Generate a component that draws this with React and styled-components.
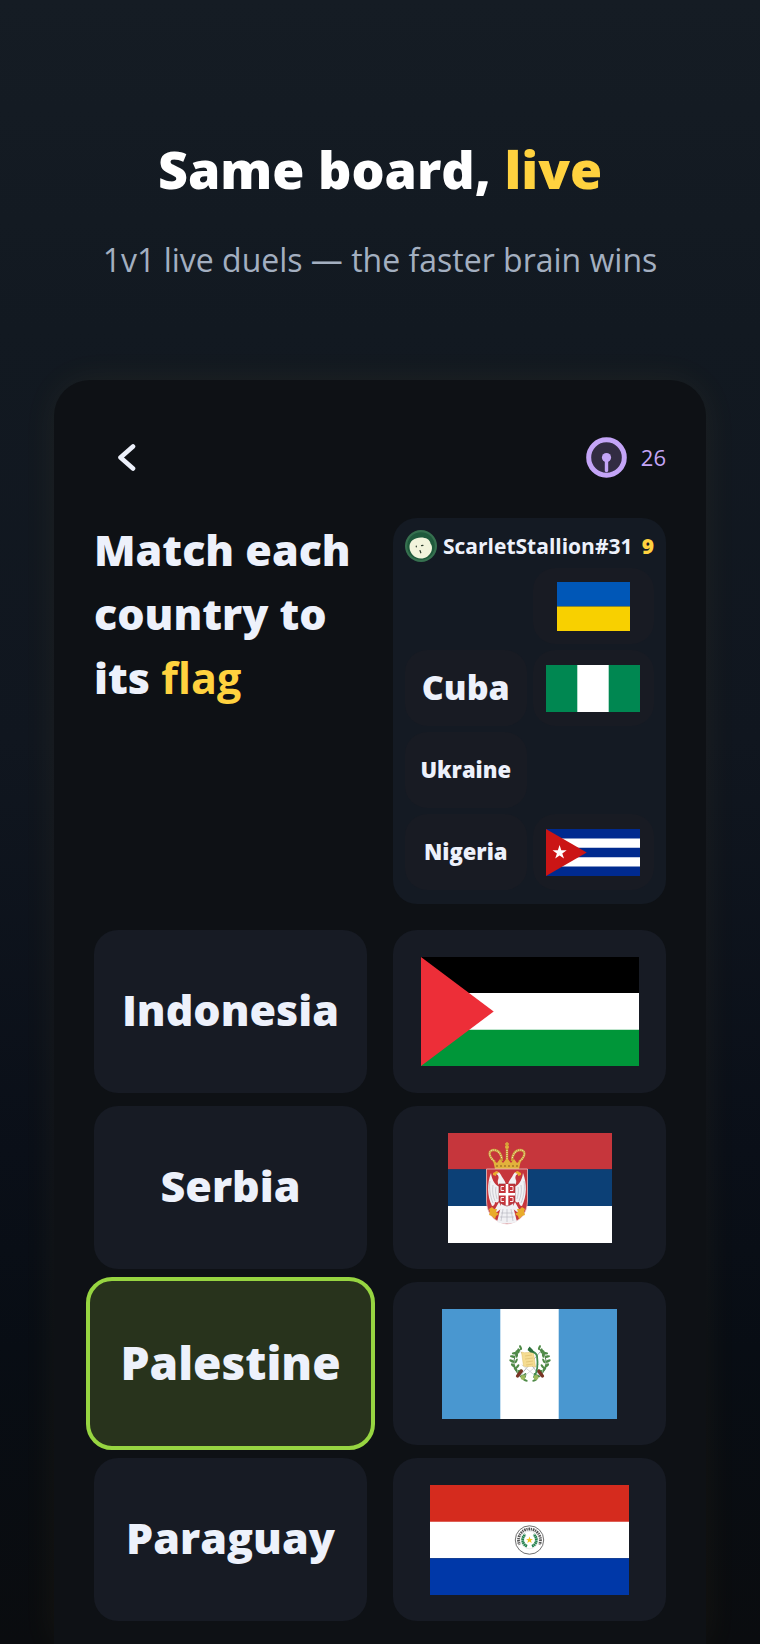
import React, { useState } from 'react';
import styled, { createGlobalStyle, css } from 'styled-components';

const colors = {
  text: '#edf1fb',
  muted: '#a3afc0',
  yellow: '#ffd23f',
  purple: '#c4a5f7',
  green: '#97d541',
  greenDark: '#28331c',
  phone: '#0e1115',
  panel: '#141a23',
  tile: '#171b24',
  miniTile: '#181b23',
};

const GlobalStyle = createGlobalStyle`
  * {
    box-sizing: border-box;
  }
  body {
    margin: 0;
    background: #0b0d0f;
    color: ${colors.text};
    font-family: 'Open Sans', 'Noto Sans', sans-serif;
  }
  button {
    font-family: inherit;
    color: inherit;
    border: 0;
    padding: 0;
    cursor: pointer;
  }
`;

const flexCenter = css`
  display: flex;
  align-items: center;
  justify-content: center;
`;

const Page = styled.main`
  display: flex;
  flex-direction: column;
  min-height: 100vh;
  overflow: hidden;
  padding: 132px 54px 0;
  background: linear-gradient(
    180deg,
    #151c24 0%,
    #121921 20%,
    #10161f 45%,
    #0a0f18 70%,
    #080d14 82%,
    #0a0c0f 100%
  );
`;

const Intro = styled.header`
  text-align: center;
`;

const Title = styled.h1`
  margin: 0;
  color: #fff;
  font-size: 52px;
  font-weight: 800;
  line-height: 74px;
`;

const Subtitle = styled.p`
  margin: 32px 0 0;
  color: ${colors.muted};
  font-size: 32px;
  font-weight: 400;
  line-height: 44px;
`;

const Accent = styled.span`
  color: ${colors.yellow};
`;

const Phone = styled.section`
  flex: 1 0 auto;
  margin-top: 98px;
  padding: 56px 40px 20px;
  border-radius: 36px 36px 0 0;
  background: ${colors.phone};
  box-shadow: 0 0 36px rgba(255, 210, 63, 0.06);
`;

const TopBar = styled.div`
  display: flex;
  align-items: center;
  justify-content: space-between;
  height: 42px;
`;

const BackButton = styled.button`
  ${flexCenter};
  width: 64px;
  height: 42px;
  background: none;
`;

const Timer = styled.div`
  display: flex;
  align-items: center;
  gap: 14px;
  color: ${colors.purple};
  font-size: 22px;
  line-height: 30px;
`;

const Columns = styled.div`
  display: grid;
  grid-template-columns: 1fr 1fr;
  column-gap: 26px;
`;

const Overview = styled(Columns)`
  align-items: start;
  margin-top: 40px;
`;

const Prompt = styled.h2`
  margin: 0;
  font-size: 43px;
  font-weight: 800;
  line-height: 64px;

  ${Accent} {
    font-weight: 700;
  }
`;

const Opponent = styled.aside`
  padding: 12px 12px 14px;
  border-radius: 24px;
  background: ${colors.panel};
`;

const OpponentHead = styled.div`
  display: flex;
  align-items: center;
  gap: 6px;
  height: 32px;
  font-size: 21px;
  font-weight: 700;
  line-height: 28px;
`;

const Score = styled.strong`
  margin-left: auto;
  color: ${colors.yellow};
  font-weight: 800;
`;

const MiniBoard = styled.div`
  display: grid;
  grid-template-columns: 1fr 1fr;
  grid-auto-rows: 76px;
  gap: 6px;
  margin-top: 6px;
`;

const MiniTile = styled.div`
  ${flexCenter};
  padding-bottom: ${props => (props.$label ? 2 : 0)}px;
  border-radius: 22px;
  background: ${props => (props.$empty ? 'none' : colors.miniTile)};
  font-size: ${props => (props.$large ? 34 : 22)}px;
  font-weight: 800;
`;

const Board = styled(Columns)`
  grid-auto-rows: 163px;
  row-gap: 13px;
  margin-top: 26px;
`;

const Tile = styled.button`
  ${flexCenter};
  padding-bottom: ${props => (props.$label ? 4 : 0)}px;
  border-radius: 24px;
  background: ${colors.tile};
  font-size: 43px;
  font-weight: 800;

  ${props =>
    props.$selected &&
    css`
      margin: -5px -8px;
      border: 4px solid ${colors.green};
      border-radius: 26px;
      background: ${colors.greenDark};
      font-size: 46px;
    `};
`;

const FlagSvg = styled.svg`
  display: block;
  flex-shrink: 0;
`;

const Flag = ({ label, width, height, children }) => (
  <FlagSvg
    role="img"
    aria-label={label}
    width={width}
    height={height}
    viewBox={`0 0 ${width} ${height}`}
  >
    {children}
  </FlagSvg>
);

const UkraineFlag = () => (
  <Flag label="Blue and yellow flag" width={73} height={49}>
    <path fill="#0057b7" d="M0 0h73v24.5H0z" />
    <path fill="#f8d000" d="M0 24.5h73V49H0z" />
  </Flag>
);

const NigeriaFlag = () => (
  <Flag label="Green, white and green flag" width={94} height={47}>
    <path fill="#008751" d="M0 0h94v47H0z" />
    <path fill="#fff" d="M31.3 0h31.4v47H31.3z" />
  </Flag>
);

const CubaFlag = () => (
  <Flag label="Striped flag with a star" width={94} height={47}>
    <path fill="#002a8f" d="M0 0h94v47H0z" />
    <path fill="#fff" d="M0 9.4h94v9.4H0zM0 28.2h94v9.4H0z" />
    <path fill="#cb1515" d="M0 0l40.7 23.5L0 47z" />
    <path
      fill="#fff"
      d="M13.6 16l1.7 5.2h5.4l-4.4 3.2 1.7 5.2-4.4-3.2-4.4 3.2 1.7-5.2-4.4-3.2h5.4z"
    />
  </Flag>
);

const PalestineFlag = () => (
  <Flag label="Black, white and green flag" width={218} height={109}>
    <path d="M0 0h218v36.3H0z" />
    <path fill="#fff" d="M0 36h218v37H0z" />
    <path fill="#009639" d="M0 72.7h218V109H0z" />
    <path fill="#ed2e38" d="M0 0l72.7 54.5L0 109z" />
  </Flag>
);

const SerbiaFlag = () => (
  <Flag label="Red, blue and white flag with arms" width={164} height={110}>
    <path fill="#c6363c" d="M0 0h164v36.5H0z" />
    <path fill="#0c4076" d="M0 36.3h164v37H0z" />
    <path fill="#fff" d="M0 73h164v37H0z" />
    {/* crown */}
    <g fill="none" stroke="#c99a35" strokeWidth="2.4">
      <path d="M47 29c-7-6-7-12-1-12 5 0 8 5 8 11" />
      <path d="M71 29c7-6 7-12 1-12-5 0-8 5-8 11" />
      <path d="M59 16v12" />
    </g>
    <g fill="none" stroke="#f7e9b5" strokeWidth="1.2" strokeDasharray="1 1">
      <path d="M46 28c-6-5-6-11 0-11 4 0 7 4 8 9" />
      <path d="M72 28c6-5 6-11 0-11-4 0-7 4-8 9" />
      <path d="M59 17v10" />
    </g>
    <path
      fill="#e2b23c"
      d="M45 27l4 3 3-4 3 4 4-5 4 5 3-4 3 4 4-3-2 9H47z"
    />
    <path stroke="#8a5a1c" strokeDasharray="2 2" d="M48 33h22" />
    <circle cx="59" cy="14" r="2" fill="#e2b23c" />
    <path stroke="#d9a93a" strokeWidth="1.4" d="M59 9v5M57 11h4" />
    {/* shield */}
    <path
      fill="#c6363c"
      stroke="#e8c3c5"
      strokeWidth="0.8"
      d="M38.5 36h41v32c0 13-9 22-20.5 23C47.500 90 38.500 81 38.500 68z"
    />
    {/* double headed eagle */}
    <g fill="#f1f1f4">
      <path d="M43 40c-4 10-4 23 1 33 2 0 3-2 3-4 2 1 4 0 4-2l3-13c-6 0-10-6-11-14z" />
      <path d="M75 40c4 10 4 23-1 33-2 0-3-2-3-4-2 1-4 0-4-2l-3-13c6 0 10-6 11-14z" />
      <path d="M58 53c0-5-3-7-5-11-1-3-4-4-6-3l1 2c3 1 3 4 2 6-1 3 1 6 4 8z" />
      <path d="M60 53c0-5 3-7 5-11 1-3 4-4 6-3l-1 2c-3 1-3 4-2 6 1 3-1 6-4 8z" />
      <path d="M52 51h14l-1 22 4 16c-6 2-14 2-20 0l4-16z" />
      <path d="M51 69l3 6-5 4-3-1zM67 69l-3 6 5 4 3-1z" />
    </g>
    <g fill="none" stroke="#b3b3bc" strokeWidth="0.6">
      <path d="M42 48c-1 7 0 15 3 22M45 52c-1 6 0 11 2 16M48 54c-1 4 0 8 1 12" />
      <path d="M76 48c1 7 0 15-3 22M73 52c1 6 0 11-2 16M70 54c1 4 0 8-1 12" />
      <path d="M55 76l-2 12M59 76v13M63 76l2 12M53 80h12M52 84h14" />
    </g>
    <g fill="#e9ac2c">
      <path d="M45 40l4-2 2 2-3 1v2l-3-1zM73 40l-4-2-2 2 3 1v2l3-1z" />
      <path d="M41 76l3-2 2 2h3l-1 3 3 2-3 2-1 3-3-3-3-1 1-3z" />
      <path d="M77 76l-3-2-2 2h-3l1 3-3 2 3 2 1 3 3-3 3-1-1-3z" />
    </g>
    <path
      fill="#c6363c"
      stroke="#8f2931"
      strokeWidth="0.6"
      d="M51 51h16v15c0 4-4 6-8 7-4-1-8-3-8-7z"
    />
    <path fill="#fff" d="M57.700 51h2.600v9H67v2.600h-6.700v10h-2.600v-10H51V60h6.700z" />
    <g fill="none" stroke="#fff" strokeWidth="0.9">
      <path d="M56 53.500h-3v4h3M62 53.500h3v4h-3" />
      <path d="M56 64.500h-3v4h3M62 64.500h3v4h-3" />
    </g>
  </Flag>
);

const laurel = [
  [0, 30, 20],
  [-4, 27, -20],
  [-7, 23, -35],
  [-9, 19, -50],
  [-10, 14, -65],
  [-9, 9, -80],
  [-7, 5, -95],
  [-4, 2, -115],
];

const LaurelBranch = () => (
  <g>
    <path
      fill="none"
      stroke="#35692f"
      strokeWidth="0.9"
      d="M0 30C-8 27-12 18-9 8-8 5-6 3-3 1"
    />
    {laurel.map(([x, y, turn]) => (
      <g key={y} fill="#4f8a47" transform={`translate(${x} ${y}) rotate(${turn})`}>
        <ellipse cx="0" cy="-2.4" rx="1.3" ry="2.8" />
        <ellipse cx="2" cy="1.6" rx="2.6" ry="1.1" />
      </g>
    ))}
  </g>
);

const GuatemalaFlag = () => (
  <Flag label="Light blue and white flag with a wreath" width={175} height={110}>
    <path fill="#4997d0" d="M0 0h175v110H0z" />
    <path fill="#fff" d="M58.3 0h58.4v110H58.3z" />
    <g transform="translate(82 39)">
      <LaurelBranch />
    </g>
    <g transform="translate(94 39) scale(-1 1)">
      <LaurelBranch />
    </g>
    {/* rifles and swords */}
    <g fill="none" strokeLinecap="round">
      <path stroke="#a7a9ae" strokeWidth="0.9" d="M79 43l20 25M98 43L77 68" />
      <path stroke="#c9cbd0" strokeWidth="0.7" d="M80 69l17-14M96 69L80 56" />
      <path stroke="#7a3424" strokeWidth="3.2" d="M75.500 67l4-5M100.500 67l-4-5" />
    </g>
    {/* scroll */}
    <path
      fill="#f5dc92"
      stroke="#dfbf68"
      strokeWidth="0.5"
      d="M79.500 43c4 2 8-1 12 1l2 14c-4-2-8 1-12-1z"
    />
    <path
      fill="none"
      stroke="#d9b868"
      strokeWidth="0.6"
      d="M83 47l7-1M83 50l8-1M84 53l7-1M84 56l7-1"
    />
    {/* quetzal */}
    <path
      fill="none"
      stroke="#3f8a4d"
      strokeWidth="1.8"
      strokeLinecap="round"
      d="M87 40c2 4 7 2 8 7 1 7 1 15-3 21"
    />
    <path fill="#2c6e3c" d="M85.500 41l2-3.500 3 3 2 3h-4z" />
    <g fill="#9db85c">
      <circle cx="81" cy="68.5" r="2.4" />
      <circle cx="94" cy="68.5" r="2.4" />
    </g>
  </Flag>
);

const ParaguayFlag = () => (
  <Flag label="Red, white and blue flag with a seal" width={199} height={110}>
    <path fill="#d52b1e" d="M0 0h199v37H0z" />
    <path fill="#fff" d="M0 36.7h199v36.6H0z" />
    <path fill="#0038a8" d="M0 73.3h199V110H0z" />
    <g transform="translate(99.5 55)" fill="none">
      <clipPath id="sealArc">
        <path d="M-15-15h30V7L0 0-15 7z" />
      </clipPath>
      <circle r="14.2" stroke="#4a4a4a" strokeWidth="0.8" />
      <circle r="8.8" stroke="#c9c9c9" strokeWidth="0.4" />
      <circle
        r="11"
        stroke="#555"
        strokeWidth="2.8"
        strokeDasharray="1.2 0.8 1.7 0.7"
        clipPath="url(#sealArc)"
      />
      <path
        stroke="#22804c"
        strokeWidth="2.8"
        strokeDasharray="1.6 0.4"
        d="M-2.500 6.300C-8 4-8-3-4-5.500M2.500 6.300C8 4 8-3 4-5.500"
      />
      <path
        fill="#f3c520"
        d="M0-3.400l.9 2.400h2.500L1.400.6l.8 2.500L0 1.600l-2.200 1.500.8-2.500-2-1.600h2.500z"
      />
    </g>
  </Flag>
);

const Avatar = () => (
  <svg width="32" height="32" viewBox="0 0 32 32" aria-hidden="true">
    <circle cx="16" cy="16" r="16" fill="#36704f" />
    <circle cx="16" cy="16" r="13.8" fill="#1f5a3c" />
    <path
      fill="#f2f4dc"
      d="M4.500 17c0-6 5-9.500 11.500-9.500 5 0 9 2 9.500 6 1.500 1.500 2 4.500 1 7.500-2 5-6 7.500-10.500 7.500C9.500 28.500 4.500 23 4.500 17z"
    />
    <g fill="none" stroke="#2c3b2c" strokeWidth="1.2" strokeLinecap="round">
      <path d="M11.300 16v.8M16.500 15.700l1.500-.4M15 20.500l.8 2.300" />
    </g>
  </svg>
);

const TimerIcon = () => (
  <svg width="41" height="41" viewBox="0 0 41 41" aria-hidden="true">
    <circle cx="20.5" cy="20.5" r="17.8" fill="#322c42" stroke={colors.purple} strokeWidth="5" />
    <circle cx="20.5" cy="20.5" r="4.6" fill={colors.purple} />
    <path stroke={colors.purple} strokeWidth="3.4" strokeLinecap="round" d="M20.500 21v12.500" />
  </svg>
);

const BackIcon = () => (
  <svg width="20" height="30" viewBox="0 0 20 30" aria-hidden="true">
    <path
      fill="none"
      stroke={colors.text}
      strokeWidth="4.6"
      strokeLinecap="round"
      strokeLinejoin="round"
      d="M17 4.500L4.500 15.500l12.500 11"
    />
  </svg>
);

const opponentRows = [
  { name: '', flag: UkraineFlag },
  { name: 'Cuba', large: true, flag: NigeriaFlag },
  { name: 'Ukraine', flag: null },
  { name: 'Nigeria', flag: CubaFlag },
];

const boardRows = [
  { name: 'Indonesia', flag: PalestineFlag },
  { name: 'Serbia', flag: SerbiaFlag },
  { name: 'Palestine', flag: GuatemalaFlag },
  { name: 'Paraguay', flag: ParaguayFlag },
];

export default function App() {
  const [selected, setSelected] = useState('Palestine');

  return (
    <Page>
      <GlobalStyle />
      <Intro>
        <Title>
          Same board, <Accent>live</Accent>
        </Title>
        <Subtitle>1v1 live duels — the faster brain wins</Subtitle>
      </Intro>

      <Phone>
        <TopBar>
          <BackButton type="button" aria-label="Back">
            <BackIcon />
          </BackButton>
          <Timer>
            <TimerIcon />
            <span>26</span>
          </Timer>
        </TopBar>

        <Overview>
          <Prompt>
            Match each country to its <Accent>flag</Accent>
          </Prompt>
          <Opponent>
            <OpponentHead>
              <Avatar />
              <span>ScarletStallion#31</span>
              <Score>9</Score>
            </OpponentHead>
            <MiniBoard>
              {opponentRows.map(({ name, large, flag: FlagImage }, i) => (
                <React.Fragment key={i}>
                  <MiniTile $label $empty={!name} $large={large}>
                    {name}
                  </MiniTile>
                  <MiniTile $empty={!FlagImage}>{FlagImage && <FlagImage />}</MiniTile>
                </React.Fragment>
              ))}
            </MiniBoard>
          </Opponent>
        </Overview>

        <Board>
          {boardRows.map(({ name, flag: FlagImage }) => (
            <React.Fragment key={name}>
              <Tile
                type="button"
                $label
                $selected={selected === name}
                aria-pressed={selected === name}
                onClick={() => setSelected(name)}
              >
                {name}
              </Tile>
              <Tile type="button">
                <FlagImage />
              </Tile>
            </React.Fragment>
          ))}
        </Board>
      </Phone>
    </Page>
  );
}
